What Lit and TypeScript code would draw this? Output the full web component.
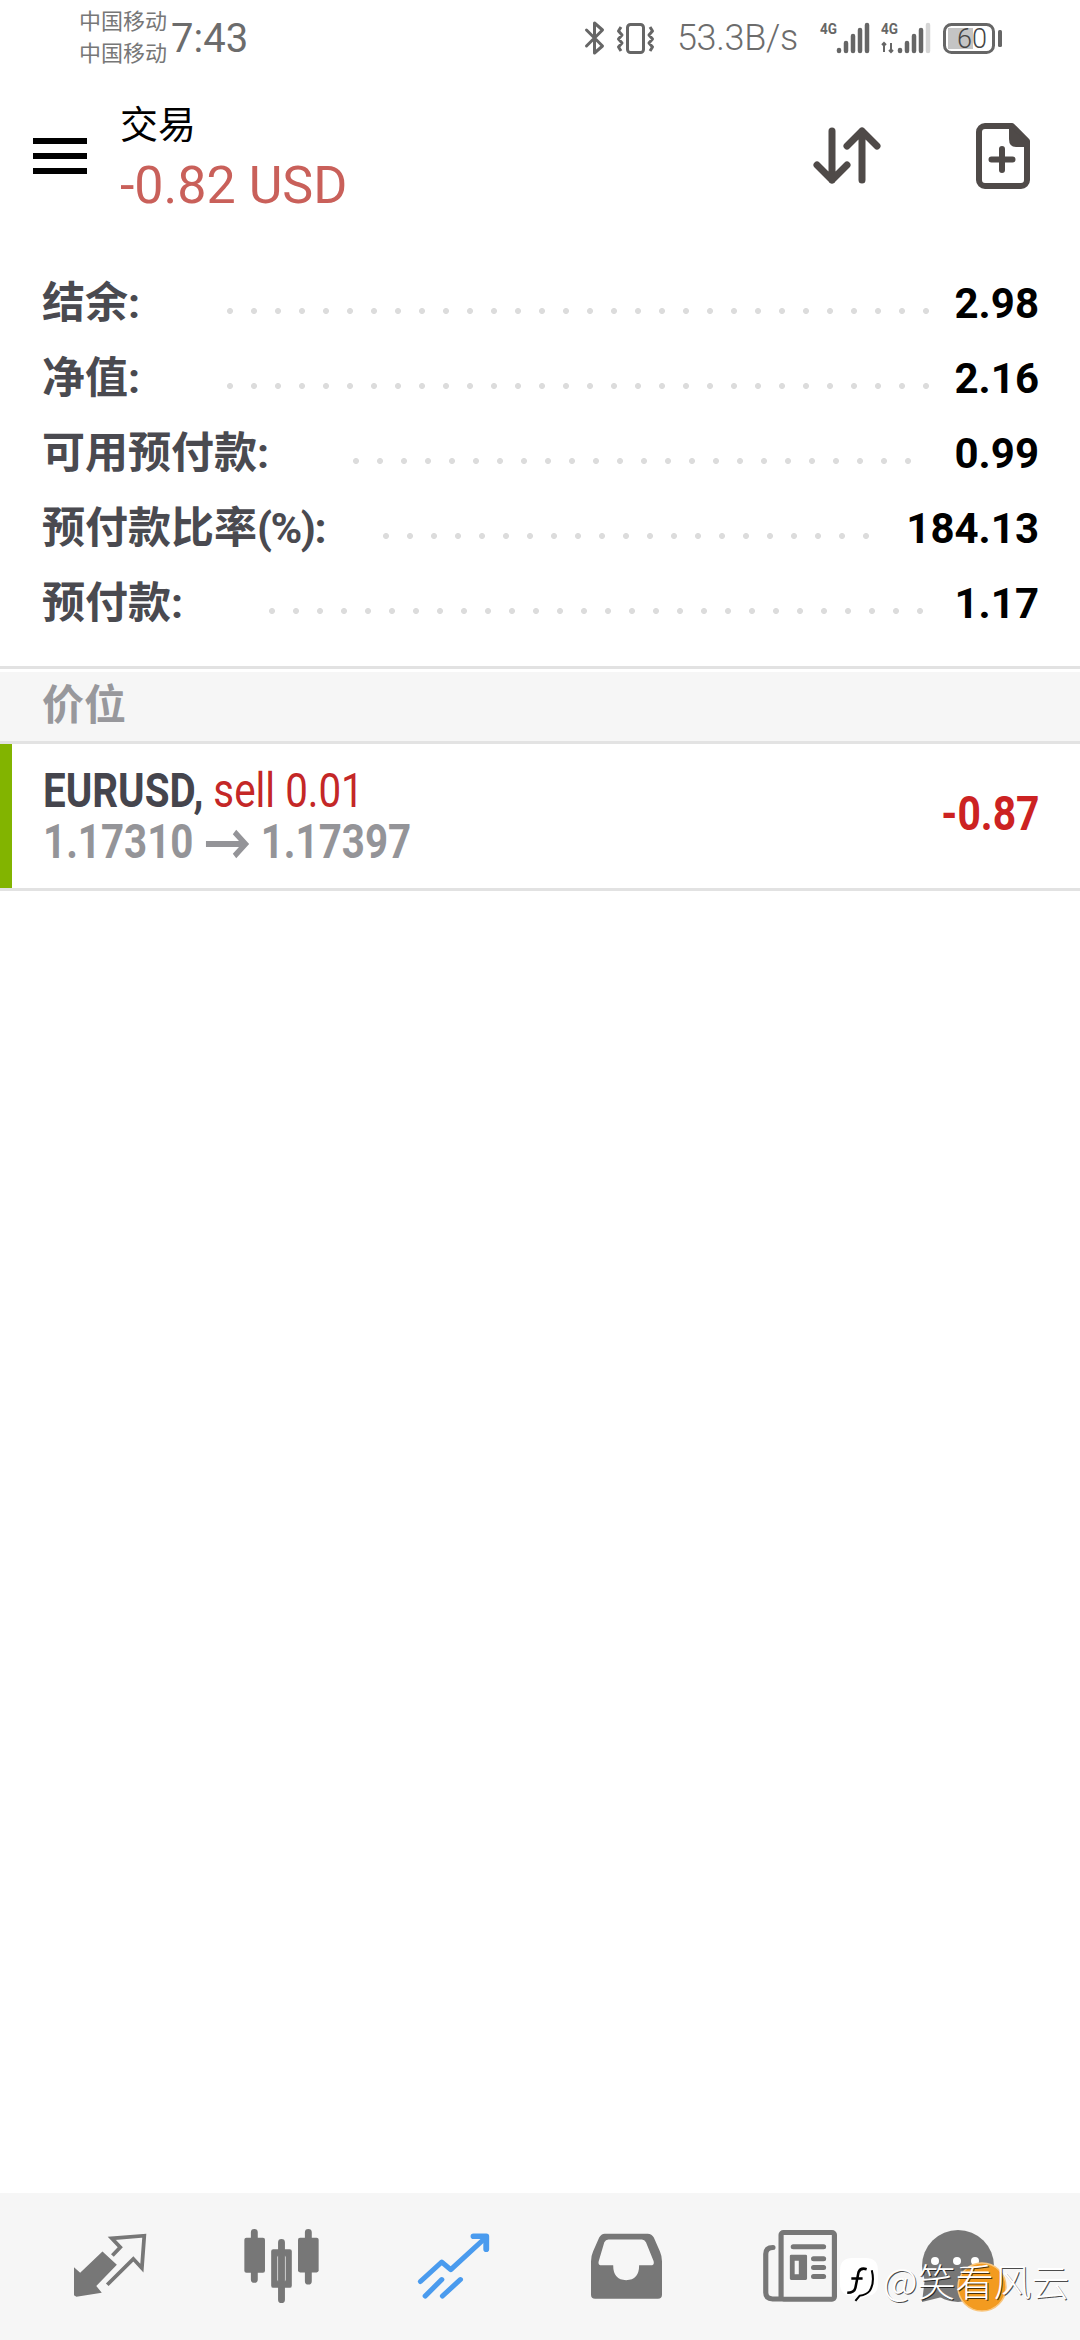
import { LitElement, html, svg, css } from "lit";
import { customElement } from "lit/decorators.js";

// start = x where the dotted leader begins, measured from the label's left edge
const ROWS = [
  { label: "结余:", tail: "", value: "2.98", dots: 30, start: 185 },
  { label: "净值:", tail: "", value: "2.16", dots: 30, start: 185 },
  { label: "可用预付款:", tail: "", value: "0.99", dots: 24, start: 311 },
  { label: "预付款比率", tail: "(%):", value: "184.13", dots: 21, start: 341 },
  { label: "预付款:", tail: "", value: "1.17", dots: 28, start: 227 },
];

const DOT_PITCH = 24;

@customElement("app-root")
export class AppRoot extends LitElement {
  static styles = css`
    :host {
      display: block;
      font-family: Roboto, "Noto Sans CJK SC", sans-serif;
      color: #000;
      background: #fff;
    }
    svg {
      display: block;
      flex: none;
      overflow: visible;
    }
    .page {
      display: flex;
      flex-direction: column;
      height: 2340px;
    }

    /* status bar */
    .status {
      display: flex;
      align-items: center;
      height: 76px;
      padding-left: 79px;
      color: #6c6c6c;
    }
    .carriers {
      font: 22px/32px "Noto Sans CJK SC", sans-serif;
      color: #777;
      padding-bottom: 6px;
    }
    .time {
      font-size: 40px;
      margin-left: 4px;
      margin-right: auto;
    }
    .vibrate { margin-left: 12px; }
    .speed {
      font-size: 36px;
      font-weight: 300;
      letter-spacing: -0.3px;
      margin-left: 23px;
      margin-right: 22px;
    }
    .sim2 { margin-left: 12px; margin-right: 13px; }
    .status-end { margin-right: 78px; }

    /* header */
    .header {
      display: flex;
      align-items: center;
      height: 160px;
      padding: 0 50px 0 33px;
    }
    .burger {
      display: flex;
      flex-direction: column;
      gap: 9px;
      width: 54px;
    }
    .burger span {
      height: 6px;
      background: #000;
    }
    .title {
      margin: -3px auto 0 33px;
    }
    .title-top {
      font: 38px/61px "Noto Sans CJK SC", sans-serif;
    }
    .title-sum {
      font-size: 52px;
      line-height: 67px;
      color: #c9605a;
    }
    .swap { margin-right: 96px; }

    /* account summary */
    .summary {
      padding: 30px 41px 25px 42px;
      border-bottom: 3px solid #e2e2e2;
      margin-bottom: 3px;
    }
    .row {
      display: flex;
      align-items: center;
      height: 75px;
    }
    .row-label {
      flex: none;
      font-size: 43px;
      font-weight: 700;
      line-height: 75px;
      white-space: nowrap;
      color: #4a4a50;
    }
    .tail { letter-spacing: -1.5px; }
    .leader {
      flex: none;
      height: 6px;
      margin-top: 14px;
      background: radial-gradient(circle at 3px 3px, #dcdcdc 2.6px, transparent 3.4px) 0 0 / 24px 6px repeat-x;
    }
    .row-value {
      margin-left: auto;
      font-size: 42px;
      font-weight: 700;
    }

    /* section head */
    .section {
      display: flex;
      align-items: center;
      height: 59px;
      padding: 0 42px 10px;
      background: #f6f6f6;
      border-bottom: 3px solid #e3e3e3;
      font: 700 42px "Noto Sans CJK SC", sans-serif;
      color: #98989c;
    }

    /* open position */
    .position-wrap {
      border-bottom: 3px solid #e2e2e2;
    }
    .position {
      display: flex;
      align-items: center;
      height: 144px;
      box-sizing: border-box;
      padding: 0 41px 0 31px;
      border-left: 12px solid #82b400;
    }
    .info {
      font-size: 48px;
      line-height: 51px;
      white-space: nowrap;
      transform: scaleX(0.84);
      transform-origin: left center;
    }
    .symbol {
      font-weight: 700;
      color: #45454d;
    }
    .side { color: #c42727; }
    .prices {
      display: flex;
      align-items: center;
      font-weight: 700;
      color: #949498;
    }
    .arrow { margin: 4px 15px 0; }
    .profit {
      margin: 0 0 5px auto;
      font-size: 48px;
      font-weight: 700;
      color: #cc2222;
      transform: scaleX(0.85);
      transform-origin: right center;
    }
    .spacer { flex: 1; }

    /* bottom tabs */
    .tabs {
      position: relative;
      display: grid;
      grid-template-columns: 170px 174px 173px 172px 159px 1fr;
      align-items: center;
      height: 147px;
      box-sizing: border-box;
      padding: 0 0 2px 74px;
      background: #f6f6f6;
    }
    .watermark {
      position: absolute;
      left: 840px;
      top: 64px;
      display: flex;
      align-items: center;
      gap: 5px;
      color: #fff;
      font: 300 38px/46px "Noto Sans CJK SC", sans-serif;
      text-shadow: 1px 1px 0 rgba(0, 0, 0, 0.7);
      white-space: nowrap;
    }
  `;

  private signal(second: boolean) {
    const bars = [
      [19, 26],
      [26, 19],
      [33, 12],
      [40, 6],
      [47, 1],
    ];
    return html`<svg width="49" height="32" viewBox="0 0 49 32">
      <text x="0" y="12" font-family="Roboto" font-weight="700" font-size="15" fill="#666" textLength="17" lengthAdjust="spacingAndGlyphs">4G</text>
      ${second
        ? svg`<path d="M3 30V21M1 23l2-2 2 2M10 21v9M8 28l2 2 2-2" fill="none" stroke="#666" stroke-width="2"/>`
        : ""}
      ${bars.map(
        ([x, top], i) =>
          svg`<line x1=${x} y1=${top + 2} x2=${x} y2="29" stroke=${second && i === 4 ? "#d5d5d5" : "#666"} stroke-width="4.5" stroke-linecap="round"/>`,
      )}
    </svg>`;
  }

  render() {
    return html`<div class="page">
      <div class="status">
        <div class="carriers"><div>中国移动</div><div>中国移动</div></div>
        <div class="time">7:43</div>
        <svg width="21" height="34" viewBox="0 0 20 34" fill="none" stroke="#666" stroke-width="3" stroke-linejoin="round" stroke-linecap="round">
          <path d="M2 9l16 16-8 7V2l8 7L2 25"/>
        </svg>
        <svg class="vibrate" width="37" height="31" viewBox="0 0 37 31" fill="none" stroke="#666" stroke-width="3" stroke-linejoin="round">
          <rect x="10.5" y="1.5" width="16" height="28" rx="3"/>
          <path d="M4 4L1.5 8 5 12l-3.500 4L5 20l-3.500 4L4 28M33 4l2.500 4-3.500 4 3.500 4-3.500 4 3.500 4L33 28"/>
        </svg>
        <div class="speed">53.3B/s</div>
        ${this.signal(false)}
        <div class="sim2">${this.signal(true)}</div>
        <svg class="status-end" width="59" height="31" viewBox="0 0 59 31">
          <rect x="5" y="5" width="25" height="21" fill="#c4c4c4"/>
          <rect x="1.500" y="1.500" width="49" height="28" rx="7" fill="none" stroke="#666" stroke-width="3"/>
          <text x="14" y="25" font-family="Roboto" font-weight="300" font-size="27" fill="#444">60</text>
          <rect x="55" y="7" width="4" height="17" rx="1.500" fill="#666"/>
        </svg>
      </div>

      <div class="header">
        <div class="burger"><span></span><span></span><span></span></div>
        <div class="title">
          <div class="title-top">交易</div>
          <div class="title-sum">-0.82 USD</div>
        </div>
        <svg class="swap" width="66" height="56" viewBox="0 0 66 56" fill="none" stroke="#4f4a48" stroke-width="7" stroke-linecap="round" stroke-linejoin="round">
          <path d="M18 3v49M3 37l15 15 15-15M48 52V3M33 18L48 3l15 15"/>
        </svg>
        <svg width="54" height="66" viewBox="0 0 54 66">
          <path d="M9 3h27l15 15v39a6 6 0 0 1-6 6H9a6 6 0 0 1-6-6V9a6 6 0 0 1 6-6z" fill="none" stroke="#4f4a48" stroke-width="6" stroke-linejoin="round"/>
          <path d="M33 3l18 16v5H40q-7 0-7-8z" fill="#4f4a48"/>
          <path d="M26 26v21M15.500 36.500h21" fill="none" stroke="#4f4a48" stroke-width="6" stroke-linecap="round"/>
        </svg>
      </div>

      <div class="summary">
        ${ROWS.map(
          (r) => html`<div class="row">
            <div class="row-label" style="width:${r.start}px">${r.label}<span class="tail">${r.tail}</span></div>
            <div class="leader" style="width:${(r.dots - 1) * DOT_PITCH + 6}px"></div>
            <div class="row-value">${r.value}</div>
          </div>`,
        )}
      </div>

      <div class="section">价位</div>

      <div class="position-wrap">
        <div class="position">
          <div class="info">
            <div><span class="symbol">EURUSD,</span> <span class="side">sell 0.01</span></div>
            <div class="prices">
              <span>1.17310</span>
              <svg class="arrow" width="50" height="30" viewBox="0 0 50 30" fill="none" stroke="#949498" stroke-width="6">
                <path d="M0 15h47M34 3l13 12-13 12"/>
              </svg>
              <span>1.17397</span>
            </div>
          </div>
          <div class="profit">-0.87</div>
        </div>
      </div>

      <div class="spacer"></div>

      <div class="tabs">
        <svg width="72" height="63" viewBox="215 165 210 190" preserveAspectRatio="none">
          <path d="M215 265l18 17 65-64 42 40-60 64 16 20-74 12-7-4z" fill="#777"/>
          <path d="M327 230l23-25-25-27 95-8-7 98-25-28-76 78" fill="none" stroke="#777" stroke-width="11"/>
        </svg>
        <svg width="75" height="74" viewBox="708 148 218 220" preserveAspectRatio="none" fill="#777">
          <path d="M738 158v140M817 188v170M895 158v145" stroke="#777" stroke-width="20" stroke-linecap="round"/>
          <rect x="709" y="174" width="60" height="104" rx="6"/>
          <rect x="865" y="174" width="60" height="103" rx="6"/>
          <path fill-rule="evenodd" d="M793 208h48a6 6 0 0 1 6 6v103a6 6 0 0 1-6 6h-48a6 6 0 0 1-6-6V214a6 6 0 0 1 6-6zM811 226a6 6 0 0 0-6 6v67a6 6 0 0 0 6 6h12a6 6 0 0 0 6-6v-67a6 6 0 0 0-6-6z"/>
        </svg>
        <svg width="71" height="66" viewBox="1215 155 206 200" preserveAspectRatio="none" fill="none" stroke="#4a9bee" stroke-width="15" stroke-linecap="round" stroke-linejoin="round">
          <path d="M1222 302l62-59 26 23 100-96"/>
          <path d="M1376 165h37v39" stroke-width="17"/>
          <path d="M1236 346l48-50M1286 346l52-50"/>
        </svg>
        <svg width="71" height="66" viewBox="147 155 208 200" preserveAspectRatio="none">
          <path fill="#777" fill-rule="evenodd" d="M187 157h126q12 0 18 12l18 42q6 14 6 30v101q0 12-12 12H159q-12 0-12-12V241q0-16 6-30l18-42q6-12 16-12zM198 175q-8 0-12 8l-16 56q-4 14 8 14h34q0 45 38 45t38-45h34q12 0 8-14l-22-56q-4-8-12-8z"/>
        </svg>
        <svg width="74" height="72" viewBox="647 148 215 215" preserveAspectRatio="none">
          <g fill="none" stroke="#777" stroke-width="15" stroke-linecap="round">
            <rect x="699.500" y="155.500" width="155" height="199" rx="7"/>
            <path d="M676 200q-21 0-21 20v115q0 19 20 19h24"/>
            <path d="M735 198h88M794 234h29M794 260h29M794 287h29"/>
          </g>
          <path fill="#777" fill-rule="evenodd" d="M729 222h42a4 4 0 0 1 4 4v67a4 4 0 0 1-4 4h-42a4 4 0 0 1-4-4v-67a4 4 0 0 1 4-4zM739 240v40h12v-40z"/>
        </svg>
        <svg width="72" height="72" viewBox="0 0 72 72">
          <circle cx="36" cy="36" r="36" fill="#777"/>
          <path d="M3 48L0 72l24-6z" fill="#777"/>
          <circle cx="13" cy="31" r="4" fill="#fff"/>
          <circle cx="35" cy="31" r="4" fill="#fff"/>
          <circle cx="53" cy="31" r="4" fill="#fff"/>
          <circle cx="60" cy="57" r="24" fill="#f39b20" stroke="#f9c67e" stroke-width="1.500"/>
        </svg>

        <div class="watermark">
          <svg width="38" height="44" viewBox="0 0 37 43">
            <path d="M12 0h13q12 0 12 12v14q0 10-10 11l-11 5v-5h-4Q0 37 0 26V12Q0 0 12 0z" fill="#fff"/>
            <path d="M31 12q3 12-2 20-3 4-10 5l-4 5" fill="none" stroke="#000" stroke-width="2"/>
            <path d="M26 11q-6-2-8 3l-3 15q-1 5-8 5M11 20h11" fill="none" stroke="#000" stroke-width="2.500"/>
          </svg>
          <span>@笑看风云</span>
        </div>
      </div>
    </div>`;
  }
}
